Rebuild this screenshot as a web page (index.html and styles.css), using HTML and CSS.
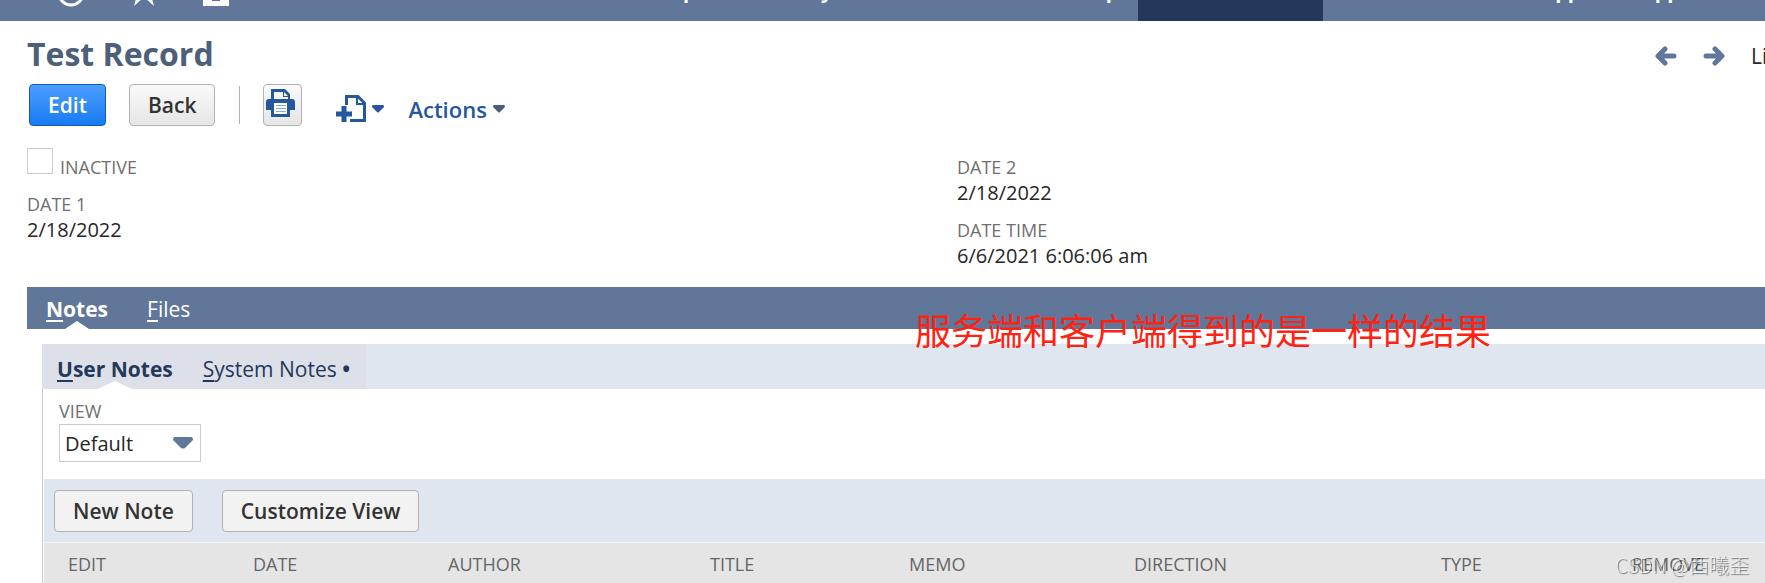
FILE: index.html
```html
<!DOCTYPE html>
<html lang="en">
<head>
  <meta charset="UTF-8">
  <meta name="viewport" content="width=device-width, initial-scale=1.0">
  <title>Test Record</title>
  <link rel="stylesheet" href="styles.css">
</head>
<body>
<header class="navbar">
  <div class="nav-icons">
    <a href="#" aria-label="Recent records">
      <svg width="28" height="28" viewBox="0 0 28 28"><circle cx="14" cy="14" r="12" fill="none" stroke="#fff" stroke-width="3"/></svg>
    </a>
    <a href="#" aria-label="Shortcuts">
      <svg width="24" height="28" viewBox="3 0 24 28"><path d="M15 0l4 10h10l-7 6 3 11-10-9-10 9 3-11-7-6h10z" fill="#fff"/></svg>
    </a>
    <a href="#" aria-label="Home">
      <svg width="26" height="28" viewBox="0 0 26 28"><path d="M0 8L13 0l13 8v19H0z" fill="#fff"/><path d="M9 16h8v6H9z" fill="#607799"/></svg>
    </a>
  </div>
  <nav class="nav-links">
    <a href="#">Reports</a>
    <a href="#">Analytics</a>
    <a href="#">Documents</a>
    <a href="#">Setup</a>
    <a href="#" class="active">Customization</a>
    <a href="#">Commerce</a>
    <a href="#">SuiteApps</a>
    <a href="#">Support</a>
  </nav>
</header>

<main class="page">
  <div class="title-row">
    <h1>Test Record</h1>
    <div class="pager">
      <a href="#" aria-label="Previous">
        <svg width="22" height="20" viewBox="0 0 22 20"><path d="M19 10H4M10 3l-7 7 7 7" fill="none" stroke="#607799" stroke-width="5" stroke-linecap="round" stroke-linejoin="round"/></svg>
      </a>
      <a href="#" aria-label="Next">
        <svg width="22" height="20" viewBox="0 0 22 20"><path d="M3 10h15M12 3l7 7-7 7" fill="none" stroke="#607799" stroke-width="5" stroke-linecap="round" stroke-linejoin="round"/></svg>
      </a>
      <a href="#" class="list-link">List</a>
    </div>
  </div>

  <div class="toolbar">
    <button class="btn btn-primary">Edit</button>
    <button class="btn btn-grad">Back</button>
    <span class="divider"></span>
    <button class="btn-print" aria-label="Print">
      <svg width="29" height="28" viewBox="0 0 29 28">
        <path d="M5 0h14l5 5v5h2a3 3 0 0 1 3 3v8h-5v7H5v-7H0v-8a3 3 0 0 1 3-3h2z" fill="#24579c"/>
        <path d="M8 3h9v5h5v2H8z" fill="#f4f4f4"/>
        <path d="M18 3l4 4h-4z" fill="#f4f4f4"/>
        <path d="M8 14h13v11H8z" fill="#fff"/>
        <path d="M10 16.500h10M10 19.500h10M10 22.500h10" stroke="#8fa9cd" stroke-width="1"/>
      </svg>
    </button>
    <button class="link-btn create" aria-label="Create new">
      <svg width="30" height="28" viewBox="0 0 30 28">
        <path d="M10.500 10V1.500H22L28.500 8v17.500H14" fill="none" stroke="#24579c" stroke-width="3"/>
        <path d="M21 2v7h7" fill="none" stroke="#24579c" stroke-width="2"/>
        <path d="M8 11v16M0 19h16" stroke="#24579c" stroke-width="5"/>
      </svg>
      <svg width="12" height="8" viewBox="0 0 12 8"><path d="M1 0h10q1 0 1 2L7 7q-1 1-2 0L0 2q0-2 1-2z" fill="#24579c"/></svg>
    </button>
    <button class="link-btn actions">Actions
      <svg width="12" height="8" viewBox="0 0 12 8"><path d="M1 0h10q1 0 1 2L7 7q-1 1-2 0L0 2q0-2 1-2z" fill="#4d5f79"/></svg>
    </button>
  </div>

  <div class="fields">
    <div class="field-col">
      <div class="check-row">
        <input type="checkbox" id="inactive">
        <label for="inactive">INACTIVE</label>
      </div>
      <div class="field">
        <span class="label">DATE 1</span>
        <span class="value">2/18/2022</span>
      </div>
    </div>
    <div class="field-col second">
      <div class="field">
        <span class="label">DATE 2</span>
        <span class="value">2/18/2022</span>
      </div>
      <div class="field">
        <span class="label">DATE TIME</span>
        <span class="value">6/6/2021 6:06:06 am</span>
      </div>
    </div>
  </div>

  <div class="tabs">
    <a href="#" class="active"><span><u>N</u>otes</span></a>
    <a href="#"><span><u>F</u>iles</span></a>
    <p class="remark" lang="zh">服务端和客户端得到的是一样的结果</p>
  </div>

  <section class="panel">
    <div class="subtabs">
      <div class="subtab-group">
        <a href="#" class="active"><span><u>U</u>ser Notes</span></a>
        <a href="#"><span><u>S</u>ystem Notes</span> <b>•</b></a>
      </div>
    </div>
    <div class="panel-body">
      <div class="view">
        <label for="view">VIEW</label>
        <div class="select-box">
          <select id="view">
            <option>Default</option>
          </select>
          <svg width="20" height="12" viewBox="0 0 20 12"><path d="M2 0h16q2 0 2 3l-8 8q-2 1-4 0L0 3q0-3 2-3z" fill="#607799"/></svg>
        </div>
      </div>
      <div class="list-bar">
        <button class="btn">New Note</button>
        <button class="btn">Customize View</button>
      </div>
      <table>
        <thead>
          <tr>
            <th class="c-edit">EDIT</th>
            <th class="c-date">DATE</th>
            <th class="c-author">AUTHOR</th>
            <th class="c-title">TITLE</th>
            <th class="c-memo">MEMO</th>
            <th class="c-direction">DIRECTION</th>
            <th class="c-type">TYPE</th>
            <th>REMOVE</th>
          </tr>
        </thead>
      </table>
    </div>
  </section>
</main>
<div class="watermark">CSDN @西曦歪</div>
</body>
</html>
```
FILE: styles.css
```css
* {
  box-sizing: border-box;
}
body {
  margin: 0;
  font-family: "Open Sans", "Noto Sans CJK SC", sans-serif;
  font-size: 20px;
  color: #262626;
  background-color: #fff;
  overflow: hidden;
}
a {
  text-decoration: none;
}
button {
  font-family: inherit;
  cursor: pointer;
}

/* top navigation */
.navbar {
  display: flex;
  align-items: flex-end;
  height: 21px;
  overflow: hidden;
  background-color: #607799;
}
.nav-icons {
  display: flex;
  gap: 47px;
  width: 638px;
  padding: 0 0 14px 57px;
}
.nav-icons svg {
  display: block;
}
.nav-links {
  display: flex;
}
.nav-links a {
  padding: 0 20px 16px;
  line-height: 28px;
  font-weight: 700;
  color: #fff;
}
.nav-links a.active {
  background-color: #24385b;
}

.page {
  padding-left: 27px;
}

/* title */
.title-row {
  display: flex;
  justify-content: space-between;
  height: 63px;
}
h1 {
  margin: 10px 0 0;
  font-size: 32px;
  line-height: 46px;
  color: #4d5f79;
}
.pager {
  display: flex;
  align-items: center;
  gap: 26px;
  width: 110px;
  height: 28px;
  margin-top: 21px;
  white-space: nowrap;
}
.pager svg {
  display: block;
}
.list-link {
  font-size: 21px;
  color: #262626;
}

/* buttons */
.toolbar {
  display: flex;
  align-items: center;
  height: 42px;
  padding-left: 2px;
}
.btn {
  height: 42px;
  padding: 0 18px;
  border: 1px solid #b2b2b2;
  border-radius: 4px;
  background-color: #f2f2f2;
  font-size: 21px;
  font-weight: 600;
  color: #333;
}
.btn-grad {
  margin-left: 23px;
  background: linear-gradient(#fafafa, #e5e5e5);
}
.btn-primary {
  border-color: #125ab2;
  background: linear-gradient(#4c9dff, #187bf2);
  color: #fff;
}
.divider {
  width: 1px;
  height: 38px;
  margin: 0 23px 0 24px;
  background-color: #b2b2b2;
}
.btn-print {
  width: 39px;
  height: 42px;
  padding: 0 0 4px 2px;
  border: 1px solid #b2b2b2;
  border-radius: 4px;
  background: linear-gradient(#fafafa, #e5e5e5);
}
.btn-print svg {
  display: block;
}
.link-btn {
  display: flex;
  align-items: center;
  gap: 6px;
  padding: 8px 0 0;
  border: none;
  background: none;
  font-size: 22px;
  font-weight: 600;
  color: #24579c;
}
.create {
  margin: 0 24px 0 34px;
}

/* fields */
.fields {
  display: grid;
  grid-template-columns: 930px 1fr;
  height: 161px;
  padding-top: 22px;
}
.check-row {
  display: flex;
  align-items: flex-start;
  gap: 7px;
  height: 44px;
}
.check-row input {
  appearance: none;
  width: 26px;
  height: 26px;
  margin: 0;
  border: 1px solid #ccc;
  background-color: #fff;
}
.check-row label {
  margin-top: 7px;
}
label, .label {
  font-size: 18px;
  line-height: 25px;
  color: #6f6f6f;
}
.field {
  display: flex;
  flex-direction: column;
  margin-bottom: 13px;
}
.value {
  line-height: 25px;
}
.second {
  padding-top: 7px;
}

/* tabs */
.tabs {
  position: relative;
  display: flex;
  gap: 39px;
  height: 42px;
  padding-left: 19px;
  background-color: #607799;
}
.tabs a, .subtabs a {
  position: relative;
  font-size: 21px;
  line-height: 45px;
}
.tabs a {
  color: #fff;
}
.tabs .active, .subtabs .active {
  font-weight: 700;
}
.tabs .active::after, .subtabs .active::after {
  content: "";
  position: absolute;
  bottom: 0;
  left: 50%;
  width: 24px;
  height: 8px;
  margin-left: -12px;
  background-color: #fff;
  clip-path: polygon(50% 0, 100% 100%, 0 100%);
}
u {
  text-decoration-thickness: 2px;
  text-underline-offset: 3px;
}
.remark {
  position: absolute;
  top: 16px;
  left: 888px;
  z-index: 1;
  margin: 0;
  font-family: "Noto Sans CJK SC", sans-serif;
  font-size: 36px;
  line-height: 52px;
  white-space: nowrap;
  color: #ff2112;
}

.panel {
  margin: 15px 0 0 15px;
}
.subtabs {
  display: flex;
  background-color: #dfe6ef;
}
.subtab-group {
  display: flex;
  gap: 30px;
  height: 45px;
  padding: 0 16px 0 15px;
  background-color: #dde0e8;
}
.subtabs a {
  line-height: 50px;
  color: #24385b;
}
.subtabs .active::after {
  width: 34px;
  margin-left: -17px;
}
.panel-body {
  padding-left: 1px;
  border-left: 1px solid #ccc;
}
.view {
  height: 90px;
  padding: 10px 0 0 15px;
}
.view label {
  display: block;
}
.select-box {
  position: relative;
  width: 142px;
  height: 38px;
}
.select-box select {
  width: 100%;
  height: 100%;
  margin: 0;
  padding: 0 5px;
  appearance: none;
  border: 1px solid #ccc;
  border-radius: 0;
  background-color: #fff;
  font-family: inherit;
  font-size: 20px;
  color: #262626;
}
.select-box svg {
  position: absolute;
  top: 13px;
  right: 8px;
  pointer-events: none;
}
.list-bar {
  display: flex;
  gap: 29px;
  padding: 11px 10px 10px;
  background-color: #dfe6ef;
}

/* notes table */
table {
  width: 100%;
  table-layout: fixed;
  border-collapse: collapse;
  border-top: 1px solid #f2f2f2;
}
th {
  height: 44px;
  padding: 0 0 1px 24px;
  background-color: #e5e5e5;
  font-size: 18px;
  font-weight: 400;
  text-align: left;
  color: #666;
}
.c-edit { width: 185px; }
.c-date { width: 195px; }
.c-author { width: 262px; }
.c-title { width: 199px; }
.c-memo { width: 225px; }
.c-direction { width: 307px; }
.c-type { width: 191px; }

.watermark {
  position: fixed;
  right: 16px;
  bottom: 5px;
  font-family: "Noto Sans CJK SC", sans-serif;
  font-size: 20px;
  font-weight: 300;
  line-height: 26px;
  color: rgba(255, 255, 255, 0.6);
  text-shadow: 1px 1px 1px rgba(0, 0, 0, 0.5);
}
```
